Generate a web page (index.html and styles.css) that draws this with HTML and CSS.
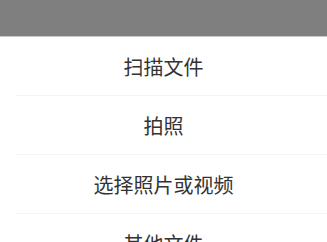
FILE: index.html
```html
<!DOCTYPE html>
<html lang="zh">
<head>
<meta charset="utf-8">
<link rel="stylesheet" href="styles.css">
</head>
<body>
<div class="mask"></div>
<div class="sheet">
  <div class="item">扫描文件</div>
  <div class="item">拍照</div>
  <div class="item">选择照片或视频</div>
  <div class="item">其他文件</div>
</div>
</body>
</html>
```
FILE: styles.css
```css
html, body {
  margin: 0;
  padding: 0;
  background: #ffffff;
  overflow: hidden;
}
body {
  width: 327px;
  height: 242px;
  font-family: "Noto Sans CJK SC", "Noto Sans", sans-serif;
}
.mask {
  height: 36px;
  background: #7f7f7f;
  border-bottom: 1px solid #c9c9c9;
}
.sheet {
  display: flex;
  flex-direction: column;
}
.item {
  height: 58px;
  display: flex;
  align-items: center;
  justify-content: center;
  font-size: 20px;
  color: #333333;
  margin-left: 16px;
  padding-right: 16px;
  border-bottom: 1px solid #f3f3f3;
}
```
